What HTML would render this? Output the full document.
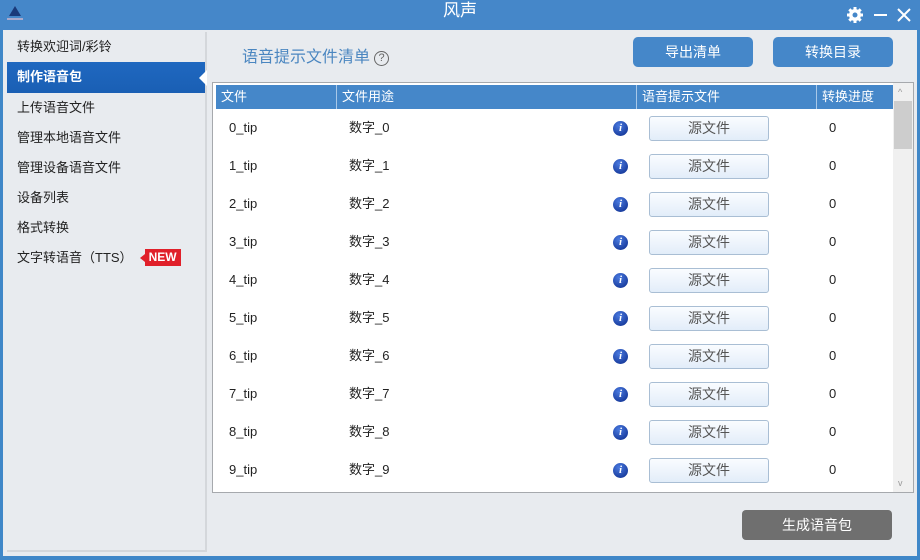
<!DOCTYPE html>
<html><head><meta charset="utf-8"><style>
*{margin:0;padding:0;box-sizing:border-box}
body{width:920px;height:560px;background:#3f87c8;font-family:"Liberation Sans","Noto Sans CJK SC",sans-serif;font-size:13px;color:#222;position:relative;overflow:hidden}
.title{position:absolute;left:0;top:0;width:920px;height:30px;background:#4587c9;color:#fff;text-align:center;font-size:17px;line-height:22px}
.frame{position:absolute;left:3px;top:30px;width:914px;height:526px;background:#e8ebef}
.side{position:absolute;left:7px;top:32px;width:200px;height:520px;background:#e8ebef;border-right:2px solid #d4d7db;border-bottom:2px solid #d4d7db}
.side div{height:30px;line-height:30px;padding-left:10px;font-size:13px;color:#222;position:relative}
.side .act{background:linear-gradient(#1f68c0,#1a5fb4);color:#fff;font-weight:bold;height:31px}
.act:after{content:"";position:absolute;right:-2px;top:8px;border:8px solid transparent;border-right-color:#fff}
.new{display:inline-block;background:#e0202a;color:#fff;font-weight:bold;font-size:12px;line-height:17px;padding:0 4px;margin-left:12px;position:relative;vertical-align:1px}
.new:before{content:"";position:absolute;left:-5px;top:5px;border:4px solid transparent;border-right-color:#e0202a;border-left:0;border-right-width:5px}
.h{position:absolute;left:242px;top:43px;font-size:16px;color:#4a86c0}
.q{display:inline-block;width:15px;height:15px;border:1.5px solid #666;border-radius:50%;font-size:11px;line-height:12px;text-align:center;color:#666;margin-left:4px;vertical-align:1px}
.btn{position:absolute;top:37px;width:120px;height:30px;background:#4587c9;border-radius:5px;color:#fff;text-align:center;line-height:30px;font-size:14px}
.tbl{position:absolute;left:212px;top:82px;width:702px;height:411px;border:1px solid #a6a9ad;background:#fff;overflow:hidden}
.hd{position:absolute;left:3px;top:2px;width:677px;height:24px;background:#4587c9;color:#fff}
.hd span{position:absolute;top:0;line-height:24px;padding-left:5px;height:24px;border-right:1px solid #a8c8e8}
.row{position:absolute;left:0;height:38px;width:680px}
.row span{position:absolute;top:0;line-height:38px}
.ic{position:absolute;left:400px;top:12px;width:15px;height:15px;border-radius:50%;background:radial-gradient(circle at 40% 30%,#4a7ae0,#0a2a8a);color:#fff;font:italic bold 11px "Liberation Serif",serif;text-align:center;line-height:15px}
.sb{position:absolute;left:436px;top:7px;width:120px;height:25px;border:1px solid #a9bed4;border-radius:3px;background:linear-gradient(#fafcff,#e2edf9);text-align:center;line-height:23px;color:#555;font-size:14px}
.scroll{position:absolute;left:680px;top:0;width:20px;height:409px;background:#f0f0f0}
.gen{position:absolute;left:742px;top:510px;width:150px;height:30px;background:#6f6f6f;border-radius:4px;color:#fff;text-align:center;line-height:30px;font-size:14px}
</style></head><body>
<div class="title">风声
<svg style="position:absolute;left:4px;top:4px" width="22" height="20"><path d="M11 2 L5 12 L17 12Z" fill="#1a3a7a"/><rect x="3" y="14" width="16" height="2" fill="#aac"/></svg>
<svg style="position:absolute;left:846px;top:6px" width="70" height="18"><circle cx="9" cy="9" r="6" fill="#fff"/><g stroke="#fff" stroke-width="3"><line x1="9" y1="1" x2="9" y2="17"/><line x1="1" y1="9" x2="17" y2="9"/><line x1="3.3" y1="3.3" x2="14.7" y2="14.7"/><line x1="14.7" y1="3.3" x2="3.3" y2="14.7"/></g><circle cx="9" cy="9" r="2.5" fill="#4587c9"/><line x1="28" y1="9" x2="41" y2="9" stroke="#fff" stroke-width="2"/><path d="M52 3 L64 15 M64 3 L52 15" stroke="#fff" stroke-width="2"/></svg>
</div>
<div class="frame"></div>
<div class="side">
<div>转换欢迎词/彩铃</div><div class="act">制作语音包</div><div>上传语音文件</div><div>管理本地语音文件</div><div>管理设备语音文件</div><div>设备列表</div><div>格式转换</div><div>文字转语音（TTS）<span class="new">NEW</span></div>
</div>
<div class="h">语音提示文件清单<span class="q">?</span></div>
<div class="btn" style="left:633px">导出清单</div>
<div class="btn" style="left:773px">转换目录</div>
<div class="tbl">
<div class="hd"><span style="left:0;width:121px">文件</span><span style="left:121px;width:300px">文件用途</span><span style="left:421px;width:180px">语音提示文件</span><span style="left:601px;width:76px;border:0">转换进度</span></div>
<div class="scroll"><div style="position:absolute;left:1px;top:18px;width:18px;height:48px;background:#cdcdcd"></div><div style="position:absolute;left:5px;top:4px;font-size:9px;color:#999">^</div><div style="position:absolute;left:5px;bottom:4px;font-size:9px;color:#999">v</div></div>
<div class="row" style="top:26px"><span style="left:16px">0_tip</span><span style="left:136px">数字_0</span><div class="ic">i</div><div class="sb">源文件</div><span style="left:616px">0</span></div>
<div class="row" style="top:64px"><span style="left:16px">1_tip</span><span style="left:136px">数字_1</span><div class="ic">i</div><div class="sb">源文件</div><span style="left:616px">0</span></div>
<div class="row" style="top:102px"><span style="left:16px">2_tip</span><span style="left:136px">数字_2</span><div class="ic">i</div><div class="sb">源文件</div><span style="left:616px">0</span></div>
<div class="row" style="top:140px"><span style="left:16px">3_tip</span><span style="left:136px">数字_3</span><div class="ic">i</div><div class="sb">源文件</div><span style="left:616px">0</span></div>
<div class="row" style="top:178px"><span style="left:16px">4_tip</span><span style="left:136px">数字_4</span><div class="ic">i</div><div class="sb">源文件</div><span style="left:616px">0</span></div>
<div class="row" style="top:216px"><span style="left:16px">5_tip</span><span style="left:136px">数字_5</span><div class="ic">i</div><div class="sb">源文件</div><span style="left:616px">0</span></div>
<div class="row" style="top:254px"><span style="left:16px">6_tip</span><span style="left:136px">数字_6</span><div class="ic">i</div><div class="sb">源文件</div><span style="left:616px">0</span></div>
<div class="row" style="top:292px"><span style="left:16px">7_tip</span><span style="left:136px">数字_7</span><div class="ic">i</div><div class="sb">源文件</div><span style="left:616px">0</span></div>
<div class="row" style="top:330px"><span style="left:16px">8_tip</span><span style="left:136px">数字_8</span><div class="ic">i</div><div class="sb">源文件</div><span style="left:616px">0</span></div>
<div class="row" style="top:368px"><span style="left:16px">9_tip</span><span style="left:136px">数字_9</span><div class="ic">i</div><div class="sb">源文件</div><span style="left:616px">0</span></div>
</div>
<div class="gen">生成语音包</div>
</body></html>
